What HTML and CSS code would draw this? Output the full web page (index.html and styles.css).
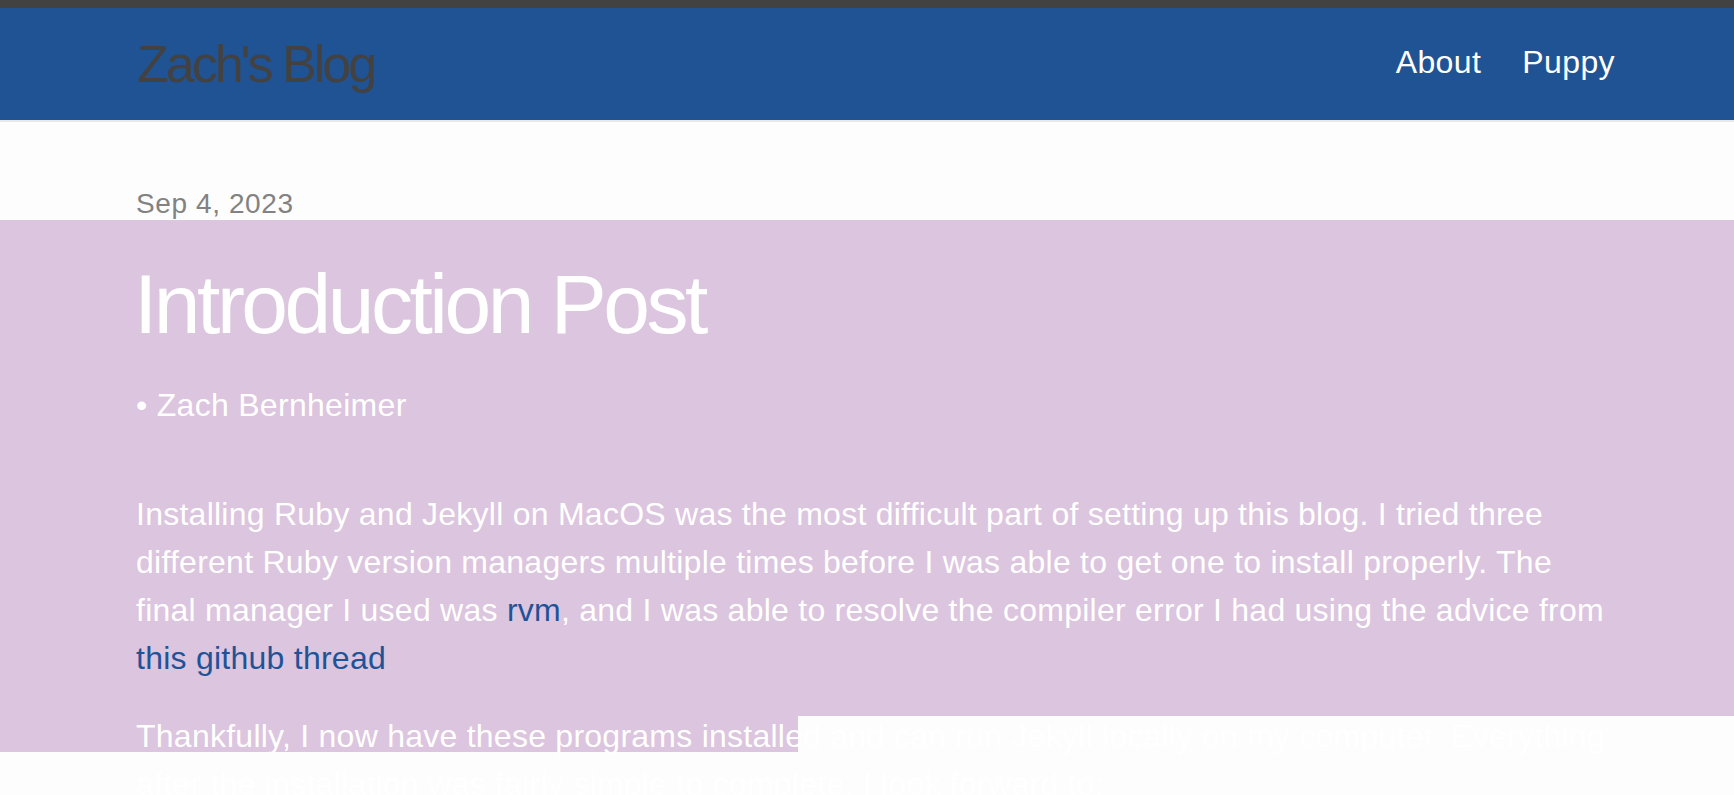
FILE: index.html
```html
<!DOCTYPE html>
<html lang="en">
<head>
<meta charset="utf-8">
<title>Introduction Post | Zach's Blog</title>
<link rel="stylesheet" href="styles.css">
</head>
<body>
<header class="site-header">
  <div class="wrapper header-row">
    <a class="site-title" href="#">Zach's Blog</a>
    <nav class="site-nav">
      <a class="page-link" href="#">About</a>
      <a class="page-link" href="#">Puppy</a>
    </nav>
  </div>
</header>
<main class="page-content">
  <article class="wrapper post">
    <div class="post-date">Sep 4, 2023</div>
    <h1 class="post-title">Introduction Post</h1>
    <div class="post-author">• Zach Bernheimer</div>
    <div class="post-body">
      <p>Installing Ruby and Jekyll on MacOS was the most difficult part of setting up this blog. I tried three<br>different Ruby version managers multiple times before I was able to get one to install properly. The<br>final manager I used was <a href="#">rvm</a>, and I was able to resolve the compiler error I had using the advice from<br><a href="#">this github thread</a></p>
      <p>Thankfully, I now have these programs installed and can run Jekyll locally on my computer. Everything<br>after the installation was fairly simple to complete. I look forward to:</p>
    </div>
  </article>
</main>
</body>
</html>
```
FILE: styles.css
```css
html, body {
  margin: 0;
  padding: 0;
}
body {
  background: #fdfdfd;
  font-family: "Liberation Sans", Arial, sans-serif;
  color: #111;
  overflow: hidden;
}
a {
  text-decoration: none;
}
.wrapper {
  padding-left: 136px;
  padding-right: 119px;
}
.site-header {
  border-top: 8px solid #424242;
  border-bottom: 2px solid #e8e8e8;
  background: #205393;
  height: 112px;
}
.header-row {
  display: flex;
  justify-content: space-between;
  align-items: flex-start;
}
.site-title {
  font-size: 52px;
  line-height: 112px;
  letter-spacing: -3px;
  color: #424242;
  margin-left: 1px;
}
.site-nav {
  display: flex;
  gap: 41px;
  line-height: 108px;
}
.page-link {
  font-size: 32px;
  letter-spacing: 0.4px;
  color: #ffffff;
}
.page-content {
  padding-top: 61px;
  min-height: 700px;
  background:
    linear-gradient(#dcc5de, #dcc5de) 0 98px / 100% 496px no-repeat,
    linear-gradient(#dcc5de, #dcc5de) 0 594px / 798px 36px no-repeat,
    #fdfdfd;
}
.post-date {
  font-size: 28px;
  line-height: 42px;
  letter-spacing: 0.6px;
  color: #828282;
}
.post-title {
  font-size: 84px;
  line-height: 84px;
  font-weight: normal;
  letter-spacing: -3.5px;
  color: #ffffff;
  margin: 37px 0 0 -2px;
}
.post-author {
  font-size: 32px;
  line-height: 48px;
  letter-spacing: 0.3px;
  color: #ffffff;
  margin-top: 35px;
}
.post-body {
  margin-top: 61px;
  font-size: 32px;
  line-height: 48px;
  letter-spacing: 0.25px;
  color: #ffffff;
}
.post-body p {
  margin: 0 0 30px;
  white-space: nowrap;
}
.post-body a {
  color: #1f5398;
}
```
